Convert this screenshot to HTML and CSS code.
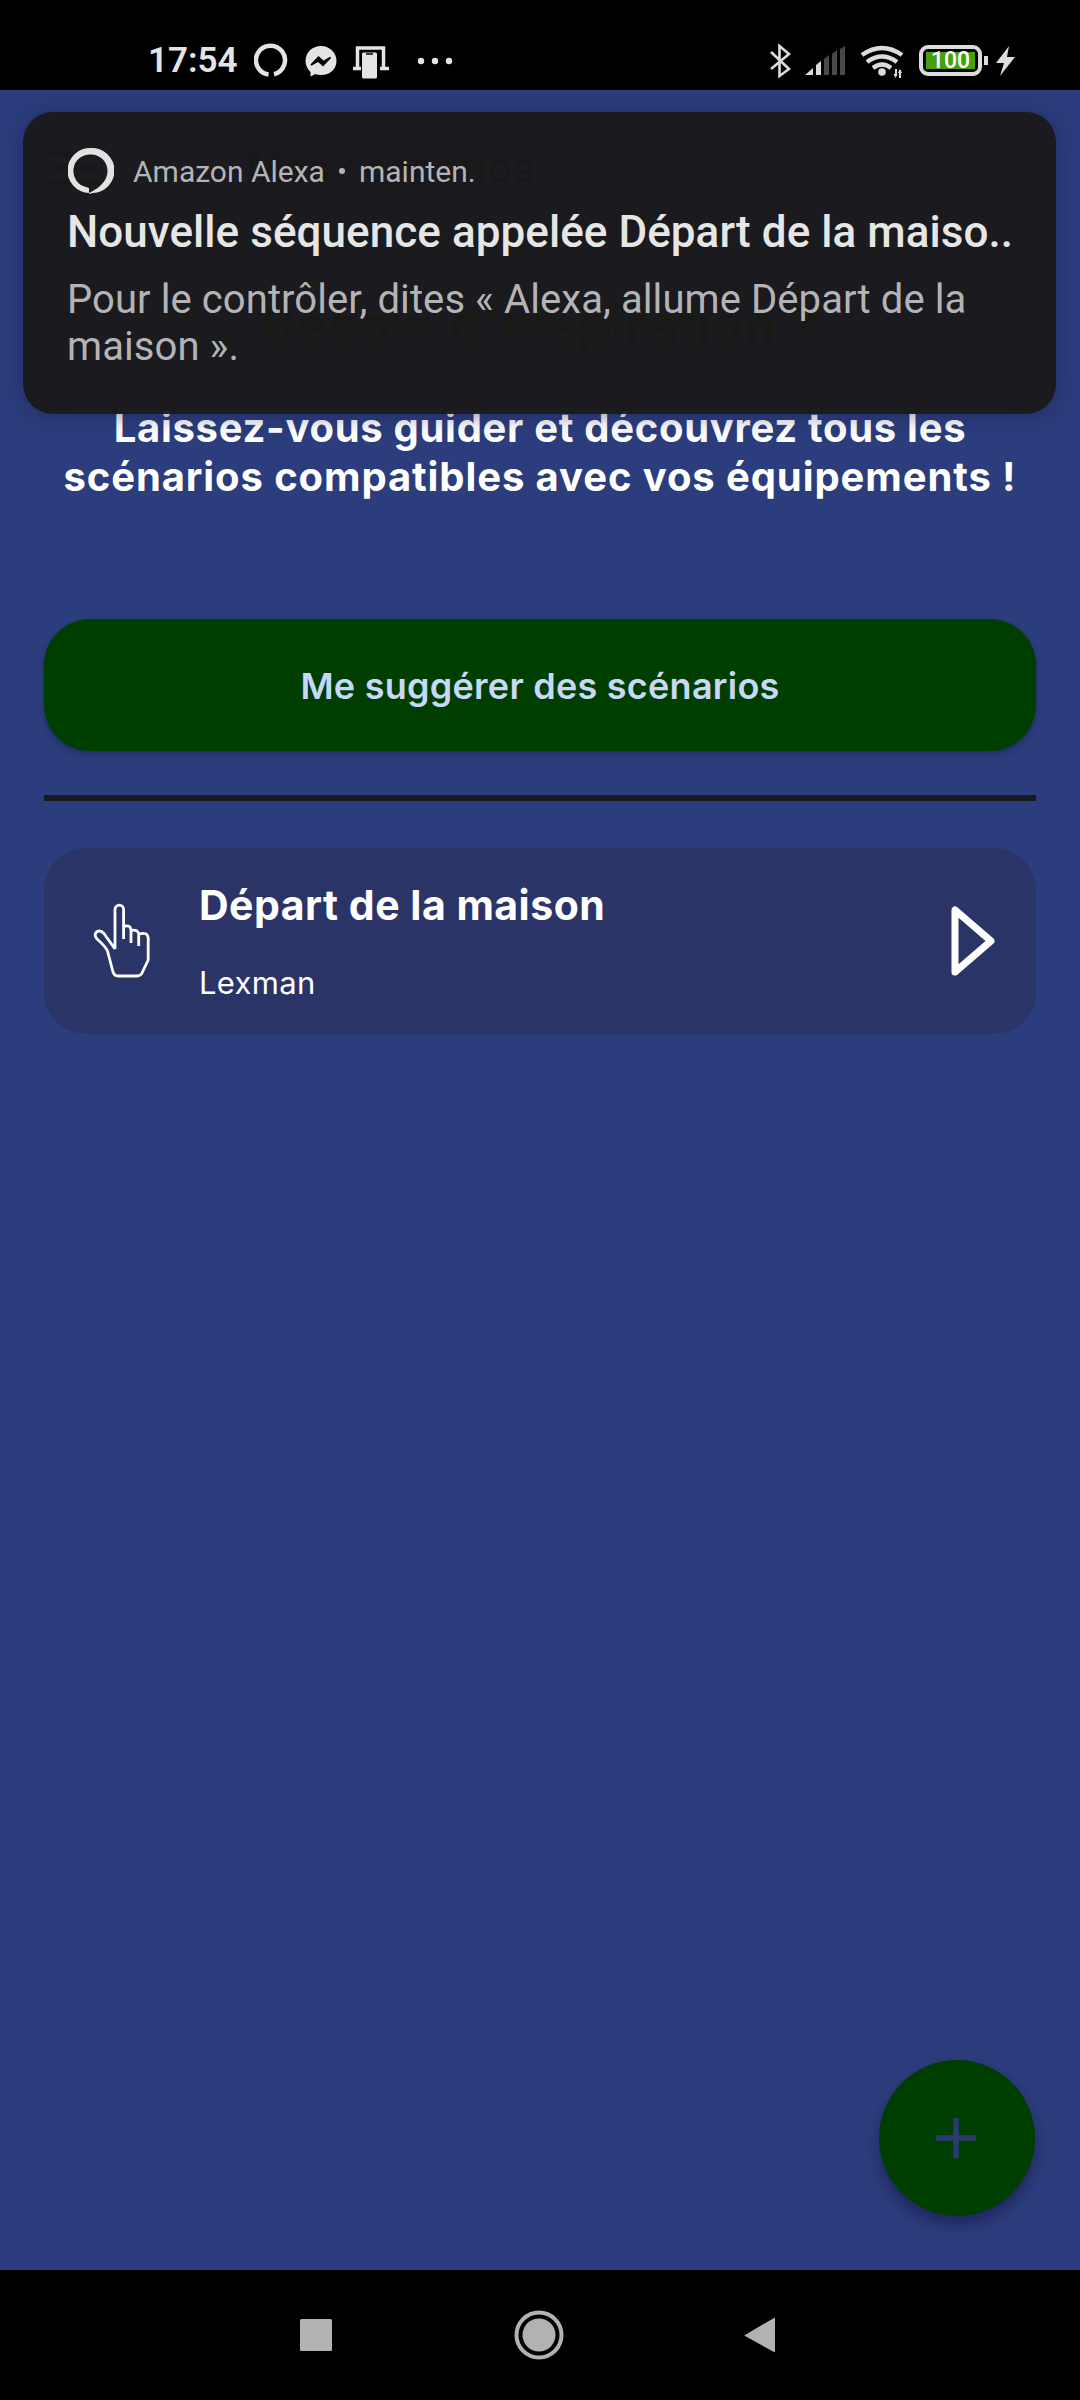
FILE: index.html
```html
<!DOCTYPE html>
<html lang="fr">
<head>
<meta charset="utf-8">
<title>Mes scénarios</title>
<link rel="stylesheet" href="styles.css">
</head>
<body>
<div class="screen">
  <header class="statusbar">
    <span class="clock">17:54</span>
    <svg class="status-left" width="202" height="40" viewBox="0 0 202 40">
      <path d="M14.500 34.500A14.500 14.500 0 1 1 20 34.200" transform="translate(0 -1)" fill="none" stroke="#e4e4e4" stroke-width="4.500"/>
      <path d="M67 5C58 5 51.500 11.500 51.500 20c0 4.500 2 8 5 11v4.500l5-2.500c2 .7 3.500 1 5.500 1 9 0 15.500-6 15.500-14S76 5 67 5z" fill="#e4e4e4"/>
      <path d="M57 24l7.500-8 5 4.500 7-4-7.500 8-5-4.500z" fill="#000" stroke="#000" stroke-width="1.500"/>
      <path d="M103.500 27V7h26v20M99 27.500h9M126 27.500h9" fill="none" stroke="#e4e4e4" stroke-width="3.500"/>
      <rect x="107.500" y="11" width="16" height="27" rx="2" fill="#e4e4e4" stroke="#000" stroke-width="1"/>
      <path d="M112 13h7" stroke="#000" stroke-width="1.500"/>
      <g fill="#e4e4e4"><circle cx="167" cy="20" r="3.200"/><circle cx="181" cy="20" r="3.200"/><circle cx="195" cy="20" r="3.200"/></g>
    </svg>
    <svg class="status-right" width="146" height="40" viewBox="0 0 146 40">
      <path d="M1 11l18 17-9.500 7V5L19 13 1 28" fill="none" stroke="#dcdcdc" stroke-width="2.600"/>
      <path d="M35 34l8-7v7zM46 24l5-4v14h-5z" fill="#dcdcdc"/>
      <path d="M54 18l5-4v20h-5zM62 13l5-4v25h-5zM70 8l5-3v29h-5z" fill="#484848"/>
      <g fill="none" stroke="#dcdcdc" stroke-width="4.500">
        <path d="M92 14q20-14 40 0M97 21q15-11 30 0M103 27q9-7 18 0"/>
      </g>
      <circle cx="112" cy="31" r="3.800" fill="#dcdcdc"/>
      <path d="M126 28v7M130 29v8" stroke="#dcdcdc" stroke-width="2"/>
      <path d="M123.500 33h4l-2 4zM128 32h4l-2-4z" fill="#dcdcdc"/>
    </svg>
    <span class="battery"><span class="battery-level">100</span></span>
    <span class="battery-tip"></span>
    <svg class="bolt" width="20" height="30" viewBox="0 0 20 30"><path d="M13 0L0 17h8L4 30 19 11h-8z" fill="#dcdcdc"/></svg>
  </header>

  <main class="app">
    <div class="app-bar">
      <svg width="48" height="34" viewBox="0 0 48 34"><path d="M0 3h48M0 17h48M0 31h48" stroke="#191a1f" stroke-width="5"/></svg>
      <span class="app-title">Mes scénarios</span>
    </div>
    <h1 class="heading">Besoin d'inspiration ?</h1>
    <p class="intro"><span class="line line-a">Laissez-vous guider et découvrez tous les</span><span class="line line-b">scénarios compatibles avec vos équipements !</span></p>
    <button class="suggest"><span>Me suggérer des scénarios</span></button>
    <div class="divider"></div>
    <article class="scenario">
      <svg class="hand" width="58" height="76" viewBox="0 0 58 76">
        <path d="M22 46V6.500a4.300 4.300 0 0 1 8.600 0V36M30.600 23.500q7-2.500 7.400 4V40M38 27.500q7.500-1.500 7.700 4V43M46 31q8.500-2.500 9.200 4V57L49 70q-1.500 3-5 3H25q-3.500 0-5-4L14.500 48Q13 44 4 36q-3.500-4-.5-7 4-2.500 7.500 1.500L22 46" fill="none" stroke="#fff" stroke-width="2.800" stroke-linejoin="round"/>
      </svg>
      <div class="scenario-text">
        <h2 class="scenario-name">Départ de la maison</h2>
        <span class="scenario-brand">Lexman</span>
      </div>
      <svg class="play" width="46" height="72" viewBox="0 0 46 72"><path d="M5 5v62L41 36z" fill="none" stroke="#fff" stroke-width="7" stroke-linejoin="round"/></svg>
    </article>
    <button class="fab" aria-label="Ajouter"><svg width="40" height="40" viewBox="0 0 40 40"><path d="M20 0v40M0 20h40" stroke="#2b3b72" stroke-width="5.500"/></svg></button>
  </main>

  <section class="notification">
    <div class="notif-head">
      <svg width="46" height="48" viewBox="0 0 46 48"><path fill-rule="evenodd" fill="#e2e2e2" d="M23 1a22.500 22.500 0 0 1 2 45l-4 1v-1A22.500 22.500 0 0 1 23 1zM23 7.500A16.500 16.500 0 0 0 18 40l3 1v5l2-1c8-4 16.500-11 16.500-21A16.500 16.500 0 0 0 23 7.500z"/></svg>
      <span class="notif-app">Amazon Alexa</span><span class="notif-dot"></span><span class="notif-time">mainten.</span>
    </div>
    <div class="notif-title">Nouvelle séquence appelée Départ de la maiso..</div>
    <div class="notif-body">Pour le contrôler, dites « Alexa, allume Départ de la<br>maison ».</div>
  </section>

  <nav class="navbar">
    <svg width="480" height="52" viewBox="0 0 480 52" fill="#b2b2b2">
      <rect x="1" y="10" width="32" height="32" rx="1.500"/>
      <circle cx="240" cy="26" r="16.500"/><circle cx="240" cy="26" r="22.500" fill="none" stroke="#b2b2b2" stroke-width="4"/>
      <path d="M446 26L475 9q1-.5 1 .5v33q0 1-1 .5L446 27q-1-.5 0-1z"/>
    </svg>
  </nav>
</div>
</body>
</html>
```
FILE: styles.css
```css
* { box-sizing: border-box; }
body { margin: 0; background: #000; }
h1, h2, p { margin: 0; }
button { border: 0; padding: 0; }

.screen {
  position: relative;
  width: 1080px;
  height: 2400px;
  display: flex;
  flex-direction: column;
  overflow: hidden;
  font-family: Roboto, sans-serif;
}

/* system status bar */
.statusbar {
  height: 90px;
  flex: none;
  display: flex;
  align-items: center;
  padding: 31px 64px 0 148px;
  background: #000;
  color: #e4e4e4;
}
.clock { width: 90px; font-size: 35px; font-weight: 600; line-height: 40px; padding-top: 1px; white-space: nowrap; }
.status-left { margin-left: 16px; }
.status-right { margin-left: auto; margin-right: 3px; }
.battery {
  width: 63px;
  height: 31px;
  padding: 3px;
  border: 4px solid #dcdcdc;
  border-radius: 9px;
}
.battery-level {
  display: block;
  height: 17px;
  background: #46a00c;
  color: #fff;
  font-size: 23px;
  font-weight: 500;
  line-height: 18px;
  text-align: center;
}
.battery-tip { width: 4px; height: 9px; margin: 0 8px 0 2px; background: #dcdcdc; }

/* application */
.app {
  flex: 1;
  display: flex;
  flex-direction: column;
  padding: 0 44px;
  background: #2b3d7c;
  color: #fff;
  font-family: Inter, sans-serif;
}
.app-bar { height: 156px; flex: none; display: flex; align-items: center; padding-left: 6px; }
.app-title { margin-left: 148px; color: #191a1f; font-size: 41px; font-weight: 600; line-height: 45px; }
.heading { height: 156px; padding-top: 49px; text-align: center; color: #003c00; font-size: 53px; font-weight: 700; line-height: 60px; }
.intro { height: 216px; padding-top: 1px; text-align: center; font-size: 40px; font-weight: 700; line-height: 49px; }
.line { display: block; white-space: nowrap; }
.line-a { letter-spacing: .7px; }
.line-b { letter-spacing: .9px; }
.suggest {
  height: 132px;
  flex: none;
  margin-top: 1px;
  padding-top: 2px;
  border-radius: 46px;
  background: #003e00;
  color: #c8d8f8;
  font: 600 36px/44px Inter, sans-serif;
  letter-spacing: .25px;
  box-shadow: 0 3px 6px rgba(0, 20, 60, .35);
}
.divider { height: 6px; flex: none; margin: 44px 0 47px; background: #191a1f; }
.scenario {
  height: 186px;
  flex: none;
  display: flex;
  align-items: center;
  padding: 0 40px 0 49px;
  border-radius: 42px;
  background: #2a3467;
}
.scenario-text { flex: 1; display: flex; flex-direction: column; gap: 33px; margin-left: 48px; }
.scenario-name { font-size: 41px; font-weight: 700; line-height: 50px; letter-spacing: .5px; white-space: nowrap; }
.scenario-brand { font-size: 31px; line-height: 38px; padding-top: 1px; letter-spacing: .3px; }
.fab {
  width: 156px;
  height: 156px;
  flex: none;
  display: flex;
  align-items: center;
  justify-content: center;
  margin: auto 1px 54px auto;
  padding-right: 2px;
  border-radius: 50%;
  background: #003e00;
  box-shadow: 0 8px 14px rgba(20, 15, 60, .5);
}

/* heads-up notification */
.notification {
  position: absolute;
  left: 23px;
  top: 112px;
  width: 1033px;
  height: 302px;
  padding: 34px 44px;
  border-radius: 30px;
  background: rgba(25, 24, 25, .94);
  box-shadow: 0 2px 20px rgba(30, 30, 80, .5);
}
.notif-head { display: flex; align-items: center; height: 50px; color: #b4b4b7; font-size: 30px; line-height: 36px; }
.notif-head svg { margin-left: 1px; }
.notif-app { margin-left: 19px; padding-top: 1px; }
.notif-dot { width: 6px; height: 6px; margin: 0 14px; border-radius: 50%; background: #b4b4b7; }
.notif-time { padding-top: 1px; }
.notif-title { margin-top: 9px; color: #e6e6e6; font-size: 44px; font-weight: 500; line-height: 54px; letter-spacing: .06px; white-space: nowrap; }
.notif-body { margin-top: 17px; color: #b4b4b7; font-size: 40px; line-height: 47px; letter-spacing: .08px; white-space: nowrap; }

/* navigation buttons */
.navbar { height: 130px; flex: none; display: flex; align-items: center; justify-content: center; padding-right: 2px; background: #000; }
```
